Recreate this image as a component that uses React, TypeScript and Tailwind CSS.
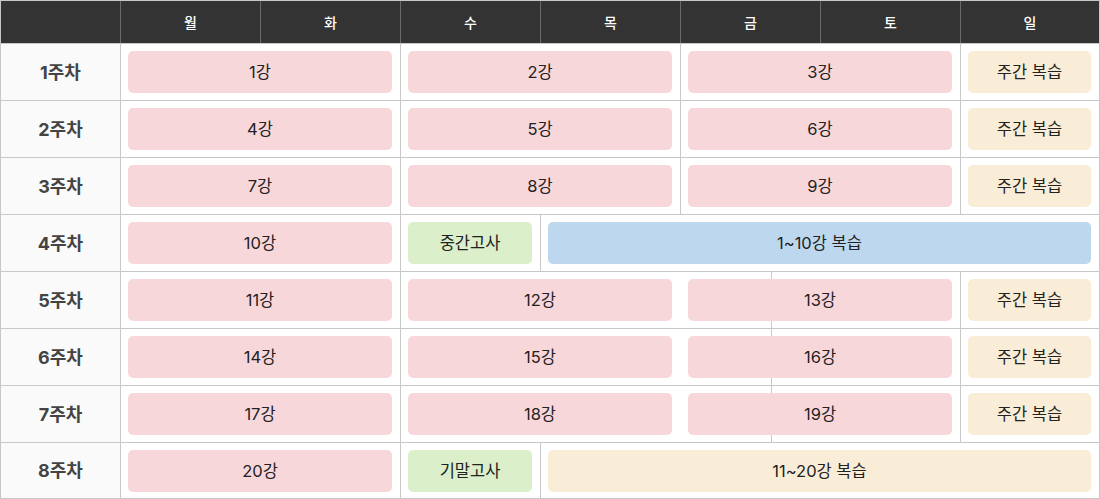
const days = ['월', '화', '수', '목', '금', '토', '일'];

type Cell = { label: string; col: string; tone: 'pink' | 'green' | 'blue' | 'beige' };
type Row = { week: string; segs: string[]; cells: Cell[]; last?: boolean };

const tones = {
  pink: 'bg-[#f8d7da]',
  green: 'bg-[#dbefca]',
  blue: 'bg-[#bdd7ee]',
  beige: 'bg-[#faedd7]',
};

// grid placement classes, written out in full
const A = 'col-start-2 col-span-2';
const B = 'col-start-4 col-span-2';
const B1 = 'col-start-4 col-span-1';
const C = 'col-start-6 col-span-2';
const D = 'col-start-8 col-span-1';
const BD = 'col-start-5 col-span-4';

const lecture = (a: number): Cell[] => [
  { label: `${a}강`, col: A, tone: 'pink' },
  { label: `${a + 1}강`, col: B, tone: 'pink' },
  { label: `${a + 2}강`, col: C, tone: 'pink' },
  { label: '주간 복습', col: D, tone: 'beige' },
];

const SEG_WEEK = ['w-[280px]', 'w-[280px]', 'w-[280px]', 'w-[139px]'];
const SEG_ODD = ['w-[280px]', 'w-[371px]', 'w-[189px]', 'w-[139px]'];
const SEG_EXAM = ['w-[280px]', 'w-[140px]', 'w-[559px]'];

const rows: Row[] = [
  { week: '1주차', segs: SEG_WEEK, cells: lecture(1) },
  { week: '2주차', segs: SEG_WEEK, cells: lecture(4) },
  { week: '3주차', segs: SEG_WEEK, cells: lecture(7) },
  {
    week: '4주차',
    segs: SEG_EXAM,
    cells: [
      { label: '10강', col: A, tone: 'pink' },
      { label: '중간고사', col: B1, tone: 'green' },
      { label: '1~10강 복습', col: BD, tone: 'blue' },
    ],
  },
  { week: '5주차', segs: SEG_ODD, cells: lecture(11) },
  { week: '6주차', segs: SEG_ODD, cells: lecture(14) },
  { week: '7주차', segs: SEG_ODD, cells: lecture(17) },
  {
    week: '8주차',
    segs: SEG_EXAM,
    last: true,
    cells: [
      { label: '20강', col: A, tone: 'pink' },
      { label: '기말고사', col: B1, tone: 'green' },
      { label: '11~20강 복습', col: BD, tone: 'beige' },
    ],
  },
];

export default function App() {
  return (
    <div className="w-[1100px] bg-white font-['Inter','Noto_Sans_CJK_KR',sans-serif]">
      <div className="border border-[#c8c8c8]">
        {/* 요일 헤더 */}
        <div className="flex h-[43px] bg-[#333333] border-b border-[#c8c8c8] text-white text-[14px] font-medium">
          <div className="w-[119px]" />
          {days.map((d, i) => (
            <div
              key={d}
              className={`${i === 6 ? 'w-[139px]' : 'w-[140px]'} flex items-center justify-center border-l border-[#6a6a6a]`}
            >
              {d}
            </div>
          ))}
        </div>

        {rows.map((row) => (
          <div
            key={row.week}
            className={`grid ${row.last ? 'h-[55px]' : 'h-[57px] border-b border-[#c8c8c8]'}`}
          >
            {/* 배경 칸 */}
            <div className="col-start-1 row-start-1 flex">
              <div className="w-[119px] flex items-center justify-center bg-[#fafafa] text-[18px] font-bold text-[#444]">
                {row.week}
              </div>
              {row.segs.map((w, i) => (
                <div key={i} className={`${w} border-l border-[#c8c8c8]`} />
              ))}
            </div>

            {/* 일정 */}
            <div className="col-start-1 row-start-1 grid grid-cols-[119px_repeat(6,140px)_139px] content-start pt-[7px]">
              {row.cells.map((c) => (
                <div key={c.label} className={`${c.col} row-start-1 px-2`}>
                  <div
                    className={`${tones[c.tone]} h-[42px] rounded-[5px] flex items-center justify-center text-[16.5px] text-[#222]`}
                  >
                    {c.label}
                  </div>
                </div>
              ))}
            </div>
          </div>
        ))}
      </div>
    </div>
  );
}
